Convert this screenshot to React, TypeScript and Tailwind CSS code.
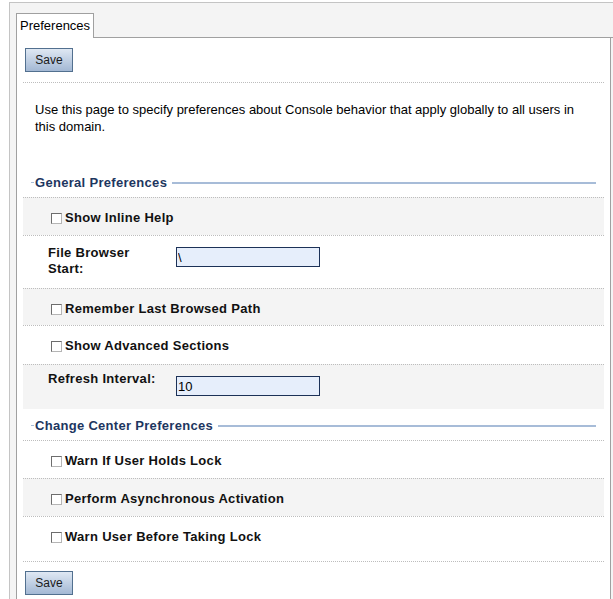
import React from 'react';

const font = { fontFamily: '"Liberation Sans", Arial, sans-serif' };

function SaveButton() {
  return (
    <button
      type="button"
      className="ml-[2px] h-[24px] w-[48px] border border-[#52708f] bg-gradient-to-b from-[#dfe8f3] to-[#a3b8d4] text-[12px] leading-none text-[#1a1a1a]"
    >
      Save
    </button>
  );
}

function Checkbox() {
  return (
    <span className="box-border inline-block h-[11px] w-[11px] shrink-0 border border-t-[#6d6d6d] border-l-[#6d6d6d] border-r-[#b5b5b5] border-b-[#b5b5b5] bg-white" />
  );
}

function Heading({ title }: { title: string }) {
  return (
    <div className="flex h-[17px] items-center">
      <span className="ml-[8px] h-[1px] w-[3px] bg-[#a9bdd7]" />
      <span className="ml-[1px] whitespace-nowrap text-[13px] font-bold tracking-[0.3px] text-[#1d3660]">{ title }</span>
      <span className="ml-[5px] mr-[8px] h-[2px] flex-1 bg-[#a7bcd8]" />
    </div>
  );
}

function CheckRow({ label, gray, h = 'h-[38px]' }: { label: string; gray?: boolean; h?: string }) {
  return (
    <div className={ `${h} border-t border-dotted border-[#bdbdbd] pl-[28px] pt-[12px] ${gray ? 'bg-[#f4f4f4]' : 'bg-white'}` }>
      <div className="flex h-[16px] items-center gap-[3px]">
        <Checkbox />
        <span className="text-[13px] font-bold leading-[16px] tracking-[0.3px] text-[#111]">{ label }</span>
      </div>
    </div>
  );
}

export default function App() {
  return (
    <div className="h-[599px] w-[613px] overflow-hidden bg-white pl-[9px] pt-[2px]" style={ font }>
      <div className="h-full border-l border-t border-[#c4c4c4] bg-[#f4f4f4] pl-[6px] pt-[10px]">
        <div className="flex">
          <div className="box-border flex h-[25px] w-[78px] items-center border border-b-0 border-[#a0a0a0] bg-white pl-[3px] text-[13px] text-black">
            Preferences
          </div>
          <div className="flex-1 border-b border-[#a0a0a0]" />
        </div>
        <div className="mr-[2px] h-full border-l border-r border-[#a0a0a0] bg-white px-[6px] pt-[9px]">
          <SaveButton />
          <div className="mt-[10px] border-t border-dotted border-[#bdbdbd]" />
          <p className="mt-[18px] pl-[12px] pr-[24px] text-[13px] leading-[17px] text-black">
            Use this page to specify preferences about Console behavior that apply globally to all users in this domain.
          </p>
          <div className="mt-[39px]">
            <Heading title="General Preferences" />
          </div>
          <div className="mt-[6px]">
            <CheckRow label="Show Inline Help" gray />
            <div className="flex h-[53px] items-start border-t border-dotted border-[#bdbdbd] bg-white pl-[25px] pt-[9px]">
              <div className="mr-[28px] w-[100px] text-[13px] font-bold leading-[16px] tracking-[0.3px] text-[#111]">File Browser Start:</div>
              <input
                readOnly
                value="\"
                className="mt-[2px] h-[20px] w-[144px] border border-[#1c3157] bg-[#e6eefb] px-[1px] text-[13px] text-black outline-none"
              />
            </div>
            <CheckRow label="Remember Last Browsed Path" gray h="h-[37px]" />
            <CheckRow label="Show Advanced Sections" h="h-[39px]" />
            <div className="flex h-[45px] items-start border-t border-dotted border-[#bdbdbd] bg-[#f4f4f4] pl-[25px] pt-[5px]">
              <div className="w-[128px] pt-[1px] text-[13px] font-bold leading-[16px] tracking-[0.3px] text-[#111]">Refresh Interval:</div>
              <input
                readOnly
                value="10"
                className="mt-[6px] h-[20px] w-[144px] border border-[#1c3157] bg-[#e6eefb] px-[1px] text-[13px] text-black outline-none"
              />
            </div>
          </div>
          <div className="mt-[8px]">
            <Heading title="Change Center Preferences" />
          </div>
          <div className="mt-[6px]">
            <CheckRow label="Warn If User Holds Lock" />
            <CheckRow label="Perform Asynchronous Activation" gray />
            <CheckRow label="Warn User Before Taking Lock" h="h-[45px]" />
            <div className="border-t border-dotted border-[#bdbdbd]" />
          </div>
          <div className="mt-[8px]">
            <SaveButton />
          </div>
        </div>
      </div>
    </div>
  );
}
